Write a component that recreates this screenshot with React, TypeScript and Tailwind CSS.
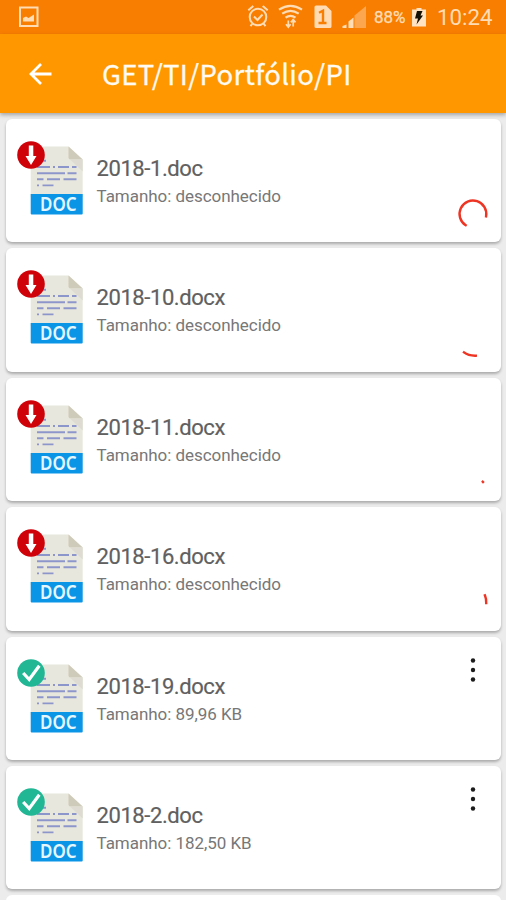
import React from "react";

type FileItem = {
    name: string;
    size: string;
    synced: boolean;
    // visible stretch of the loading ring, drawn in a 40x40 box
    arc?: string;
};

const FILES: FileItem[] = [
    { name: "2018-1.doc", size: "desconhecido", synced: false, arc: "M12.7 31.2A13.4 13.4 0 1 1 33.1 22.4" },
    { name: "2018-10.docx", size: "desconhecido", synced: false, arc: "M11 29.4Q15.5 32.9 22.8 32.7" },
    { name: "2018-11.docx", size: "desconhecido", synced: false, arc: "M29.8 28.8L30 29" },
    { name: "2018-16.docx", size: "desconhecido", synced: false, arc: "M31.9 13.3Q33.3 16.5 33.2 21" },
    { name: "2018-19.docx", size: "89,96 KB", synced: true },
    { name: "2018-2.doc", size: "182,50 KB", synced: true },
];

function DocIcon({ synced }: { synced: boolean }) {
    return (
        <svg width="72" height="80" viewBox="0 0 72 80" className="shrink-0">
            <path d="M18.7 8.5a2 2 0 0 1 2-2H56.5L70.7 19.5V57H18.7z" fill="#e8e7dd" />
            <path d="M56.5 6.5V17.5a2 2 0 0 0 2 2H70.7z" fill="#cfcbba" />
            <path d="M58 19.5H70.7V31.5z" fill="#dedcd2" />
            <path
                d="M29 20.7h5M25 27h13M41 27h2M46 27h11M60 27h4.5M25 33.3h28M55.5 33.3h9M25 39.3h6.500M35 39.3h13M51.5 39.3h13M25 45.4h2M30.5 45.4h11"
                stroke="#8d96cb"
                strokeWidth="1.9"
                fill="none"
            />
            <path d="M18.7 54.1H70.7V73.4a1 1 0 0 1-1 1H19.7a1 1 0 0 1-1-1z" fill="#0b95e6" />
            <text
                x="28"
                y="71.4"
                textLength="36.5"
                lengthAdjust="spacingAndGlyphs"
                className="fill-[#e4f7ff] font-['Noto_Sans',sans-serif] text-[19px] font-semibold"
            >
                DOC
            </text>
            {synced ? (
                <>
                    <circle cx="19" cy="15" r="13.8" fill="#21b694" />
                    <path d="M11.2 15l6 6.5L27.3 7.8" stroke="#fff" strokeWidth="3.2" fill="none" />
                </>
            ) : (
                <>
                    <circle cx="19" cy="15" r="13.8" fill="#cf0209" />
                    <path d="M16.8 5.5h4.5V16h3.2L19 25l-5.5-9h3.3z" fill="#fff" />
                </>
            )}
        </svg>
    );
}

function FileCard({ file }: { file: FileItem }) {
    return (
        <div className="flex h-[123.4px] shrink-0 rounded-[6px] bg-white pl-[6px] pr-[8px] shadow-[0_2px_3px_rgba(0,0,0,0.28)]">
            <div className="pt-[21px]">
                <DocIcon synced={file.synced} />
            </div>
            <div className="flex-1 whitespace-nowrap pl-[12.5px] pt-[36px] font-['Roboto',sans-serif]">
                <div className="text-[22px] leading-[28px] tracking-[-0.42px] text-[#606060] [-webkit-text-stroke:0.2px_#606060]">
                    {file.name}
                </div>
                <div className="text-[17px] leading-[27px] tracking-[-0.05px] text-[#777777]">Tamanho: {file.size}</div>
            </div>
            {file.arc ? (
                <svg width="40" height="40" viewBox="0 0 40 40" className="mt-[75px]">
                    <path d={file.arc} stroke="#ee3524" strokeWidth="2.4" strokeLinecap="square" fill="none" />
                </svg>
            ) : (
                <svg width="40" height="40" viewBox="0 0 40 40" className="mt-[13px]">
                    <circle cx="20" cy="10.5" r="2.2" fill="#1c1c1c" />
                    <circle cx="20" cy="20" r="2.2" fill="#1c1c1c" />
                    <circle cx="20" cy="29.5" r="2.2" fill="#1c1c1c" />
                </svg>
            )}
        </div>
    );
}

function StatusBar() {
    return (
        <div className="flex h-[34px] shrink-0 items-center bg-[#f87e02] pl-[18px] font-['Roboto',sans-serif] text-[#ffdcb4]">
            <svg width="22" height="22" viewBox="0 0 22 22">
                <path d="M2 1.5H19.5V20H2z" fill="none" stroke="#ffdcb4" strokeWidth="2" />
                <path d="M5 15.5V12l3-1.5 2.5 1.5L16 8.5v7z" fill="#ffdcb4" />
            </svg>
            <div className="flex-1" />
            {/* Alarm, wifi, sim and signal */}
            <svg width="122" height="34" viewBox="246 0 122 34" fill="none" stroke="#ffdcb4" strokeWidth="2">
                <circle cx="258" cy="17" r="8.3" />
                <path d="M254 16.5l3.5 3.5 5-5.5M248.3 10.3l5-4.3M267.7 10.3l-5-4.3M252.5 23.5l-2 2.7M263.5 23.5l2 2.7" />
                <path d="M279 9.7q11.5-7.5 23 0M282.2 13.7q8.3-5.5 16.5 0M285.5 17.7q5-3.5 10 0" strokeWidth="2.2" />
                <path d="M288.3 27v-6.5M286 24.3l2.3 2.9 2.3-2.9M293.2 19.5v7M290.9 22.4l2.3-2.9 2.3 2.9" strokeWidth="1.7" />
                <path d="M316 5.5h10l5.5 5.5v15.5a1.5 1.5 0 0 1-1.5 1.5h-14a1.5 1.5 0 0 1-1.5-1.5v-19.5a1.5 1.5 0 0 1 1.5-1.5z" fill="#ffdcb4" stroke="none" />
                <path d="M319 12.8l4-2v12.7M318.5 23h8" stroke="#f87e02" strokeWidth="2.4" />
                <path d="M342.5 28v-2l4-1.5v3.5zM348.5 28v-6.5l5-4v10.5z" fill="#ffdcb4" stroke="none" />
                <path d="M354.5 28V15.5L366 6V28z" fill="#fca650" stroke="none" />
            </svg>
            <span className="ml-[6px] w-[37px] whitespace-nowrap pt-[2px] text-[17px] tracking-[-0.1px] [-webkit-text-stroke:0.3px_#ffdcb4]">
                88%
            </span>
            <svg width="16" height="20" viewBox="0 0 16 20">
                <path d="M1 2.5h4.5V1h5v1.5H15V19.5H1z" fill="#ffe3c2" />
                <path d="M6 4h5.5L9.5 8.5H12L5.5 17.5 7 11.5H4z" fill="#151006" />
            </svg>
            <span className="ml-[10px] w-[69px] whitespace-nowrap pt-px text-[22.3px]">10:24</span>
        </div>
    );
}

export default function App() {
    return (
        <div className="flex h-[900px] w-[506px] flex-col overflow-hidden bg-[#ececec]">
            <StatusBar />

            {/* Toolbar */}
            <div className="flex h-[79px] shrink-0 items-center bg-[#ff9800] pl-[28px] shadow-[0_2px_4px_rgba(0,0,0,0.3)]">
                <svg width="26" height="26" viewBox="0 0 26 26" fill="none" stroke="#fff" strokeWidth="2.8">
                    <path d="M23.5 13H3M13 3L3 13l10 10" />
                </svg>
                <h1 className="whitespace-nowrap pb-[2px] pl-[48px] font-['Noto_Sans_CJK_SC',sans-serif] text-[27.5px] leading-[36px] tracking-[0.35px] text-[#fffaf2] [-webkit-text-stroke:0.3px_#fffaf2]">
                    GET/TI/Portfólio/PI
                </h1>
            </div>

            {/* File list */}
            <div className="flex flex-col gap-[6px] pl-[6px] pr-[5px] pt-[6px]">
                {FILES.map((file) => (
                    <FileCard key={file.name} file={file} />
                ))}
                <div className="h-[20px] rounded-[6px] bg-white" />
            </div>
        </div>
    );
}
